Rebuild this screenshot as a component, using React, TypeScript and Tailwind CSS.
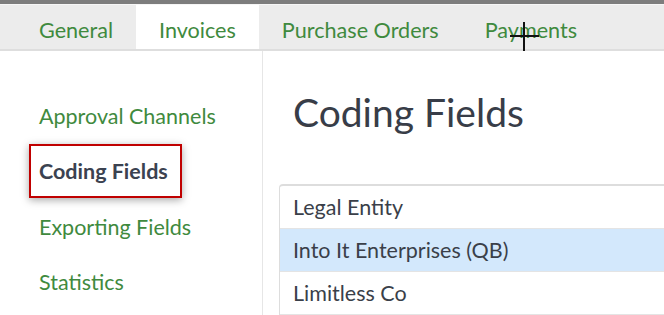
import React from 'react';

const tabs = ['General', 'Invoices', 'Purchase Orders', 'Payments'];
const sideItems = ['Approval Channels', 'Coding Fields', 'Exporting Fields', 'Statistics'];
const rows = ['Legal Entity', 'Into It Enterprises (QB)', 'Limitless Co'];

const App = () => {
    return (
        <div className="relative h-[315px] w-[664px] overflow-hidden bg-white font-['Lato',sans-serif]">
            <div className="h-[4px] bg-[#7d7d7d]" />
            <div className="h-px bg-[#f6f6f6]" />
            <nav className="flex h-[46px] border-b-2 border-[#dedede] bg-[#ececec] pl-4">
                {tabs.map((t) => (
                    <div
                        key={t}
                        className={`flex items-center px-[23px] pt-[7px] text-[21.6px] text-[#3f8a3e] ${t === 'Invoices' ? 'bg-white' : ''}`}
                    >
                        {t}
                    </div>
                ))}
            </nav>

            <div className="flex">
                <aside className="h-[270px] w-[263px] shrink-0 border-r border-[#e6e6e6] pl-[39px] pt-[37px]">
                    {sideItems.map((item) => (
                        <div key={item} className="flex h-[55.5px] items-center">
                            {item === 'Coding Fields' ? (
                                <span className="-ml-[10px] border-2 border-[#c00000] py-[9px] pl-2 pr-3 text-[21.5px] font-bold text-[#3b4250] shadow-[0_2px_8px_rgba(0,0,0,0.35)]">
                                    {item}
                                </span>
                            ) : (
                                <span className="text-[21.5px] text-[#3f8a3e]">{item}</span>
                            )}
                        </div>
                    ))}
                </aside>

                <main className="flex-1 pl-4 pt-[36px]">
                    <h1 className="pl-[14px] text-[39px] leading-[50px] text-[#383d48]">Coding Fields</h1>
                    <div className="mt-[47px] rounded-tl border-l border-t-2 border-[#dddddd]">
                        {rows.map((r, i) => (
                            <div
                                key={r}
                                className={`flex h-[43px] items-center border-b border-[#e4e4e4] pl-[13px] text-[21.5px] text-[#3a3f49] ${i === 1 ? 'bg-[#d3e8fc]' : ''}`}
                            >
                                {r}
                            </div>
                        ))}
                    </div>
                </main>
            </div>

            {/* mouse cursor captured in the screenshot */}
            <svg className="absolute left-[510px] top-[22px]" width="30" height="30" viewBox="0 0 30 30">
                <rect x="13" y="0" width="2" height="29" fill="#111" />
                <rect x="0" y="13" width="29" height="2" fill="#111" />
            </svg>
        </div>
    );
};

export default App;
